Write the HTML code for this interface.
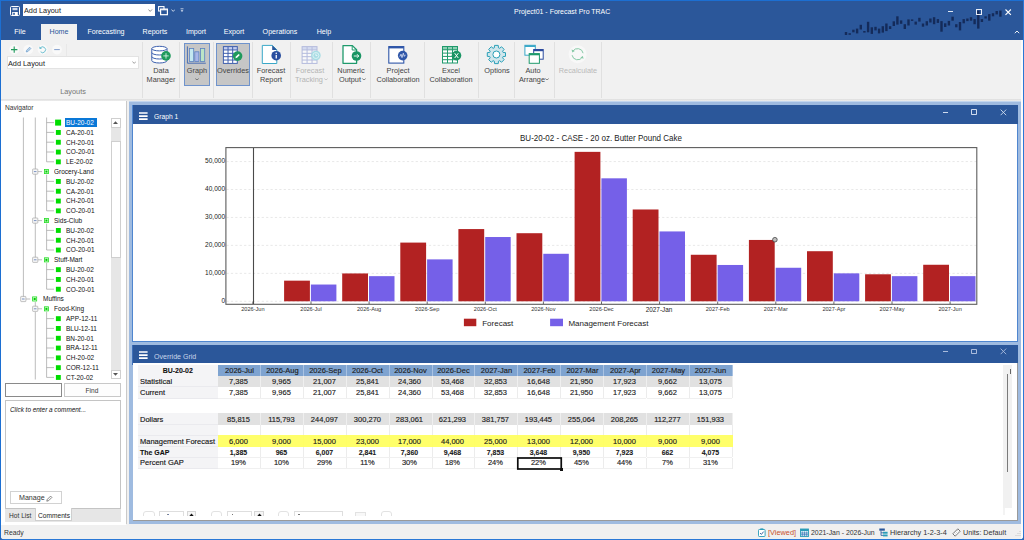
<!DOCTYPE html><html><head><meta charset="utf-8"><title>Project01 - Forecast Pro TRAC</title><style>
*{box-sizing:border-box;margin:0;padding:0}
html,body{width:1024px;height:540px;overflow:hidden;background:#f0f0f0}
body{font-family:"Liberation Sans",sans-serif;position:relative;color:#222}
.a{position:absolute}
.t{position:absolute;white-space:nowrap;line-height:1}
.c{text-align:center}
.ui{font-size:7.2px;color:#444}
.sep{position:absolute;top:42px;width:1px;height:55.5px;background:#e0e0e0}
.tab{position:absolute;top:27.9px;font-size:7.9px;transform:scaleX(.9);color:#fff;white-space:nowrap;line-height:1;text-align:center}
.rl{position:absolute;font-size:7.9px;transform:scaleX(.93);color:#444;white-space:nowrap;line-height:1;text-align:center;width:60px}
.tr{position:absolute;font-size:7.4px;color:#111;white-space:nowrap;line-height:1;transform:scaleX(.88);transform-origin:0 0}
.u{position:absolute;white-space:nowrap;line-height:1;font-size:7.9px;transform-origin:0 0}
.gb{font-weight:bold;transform:scaleX(.88)!important;-webkit-text-stroke:0.1px #111!important}
.g{position:absolute;font-size:7.9px;transform:scaleX(.95);-webkit-text-stroke:0.15px #222;color:#111;white-space:nowrap;line-height:11px;height:11px;text-align:center}
</style></head><body>
<div class="a" style="left:0;top:0;width:1024px;height:40px;background:#2b579a"></div>
<div class="a" style="left:0;top:0;width:1024px;height:1px;background:#1c6fd2"></div>
<div class="a" style="left:0;top:40px;width:1024px;height:59px;background:#f1f1f1"></div>
<div class="a" style="left:0;top:99px;width:1024px;height:2px;background:linear-gradient(#dedede,#ececec)"></div>
<div class="a" style="left:40.5px;top:24px;width:36.5px;height:16px;background:#f1f1f1"></div>
<svg class="a" style="left:10px;top:5.5px" width="10" height="10" viewBox="0 0 10 10"><rect x="0.5" y="0.5" width="9" height="9" rx="1" fill="#2b579a" stroke="#fff" stroke-width="1"/><rect x="2.5" y="1.8" width="5" height="2.4" fill="#c9d6ea"/><rect x="2.2" y="6" width="5.6" height="3.5" fill="#fff"/><rect x="3.2" y="6.8" width="1.6" height="2" fill="#2b579a"/></svg>
<div class="a" style="left:22.8px;top:3.8px;width:132.2px;height:12.6px;background:#fff"></div>
<div class="u" style="left:24.2px;top:6.8px;transform:scaleX(.925);color:#222">Add Layout</div>
<svg class="a" style="left:148.3px;top:8.6px" width="4.4" height="3" viewBox="0 0 4.4 3"><path d="M0.4 0.5 L2.2 2.4 L4 0.5" fill="none" stroke="#777" stroke-width="0.85"/></svg>
<svg class="a" style="left:158px;top:5.5px" width="11" height="10" viewBox="0 0 11 10"><rect x="0.6" y="0.6" width="5.4" height="4.4" fill="none" stroke="#fff" stroke-width="1.1"/><rect x="2.6" y="3.1" width="6.8" height="5.6" fill="#2b579a" stroke="#fff" stroke-width="1.2"/><rect x="3.2" y="3.3" width="5.6" height="1" fill="#fff"/></svg>
<svg class="a" style="left:170.8px;top:8.6px" width="4.4" height="3" viewBox="0 0 4.4 3"><path d="M0.4 0.5 L2.2 2.4 L4 0.5" fill="none" stroke="#dfe7f3" stroke-width="0.85"/></svg>
<svg class="a" style="left:179.8px;top:7.8px" width="4" height="5" viewBox="0 0 4 5"><path d="M0.5 0.8 H3.5" stroke="#dfe7f3" stroke-width="0.8"/><path d="M0.6 2.2 L2 4 L3.4 2.2 Z" fill="#dfe7f3"/></svg>
<div class="u" style="left:514px;top:8.2px;transform:scaleX(.883);color:#fff">Project01 - Forecast Pro TRAC</div>
<svg class="a" style="left:0;top:0" width="1024" height="40" viewBox="0 0 1024 40"><rect x="844.8" y="32.0" width="2.4" height="3.0" fill="#142b5a"/><rect x="848.5" y="33.2" width="2.4" height="1.6" fill="#142b5a"/><rect x="852.2" y="29.7" width="2.4" height="2.6" fill="#142b5a"/><rect x="855.9" y="28.6" width="2.4" height="4.8" fill="#142b5a"/><rect x="859.6" y="24.8" width="2.4" height="4.7" fill="#142b5a"/><rect x="863.2" y="31.0" width="2.4" height="1.6" fill="#142b5a"/><rect x="866.9" y="21.8" width="2.4" height="10.5" fill="#142b5a"/><rect x="870.6" y="27.3" width="2.4" height="6.6" fill="#142b5a"/><rect x="874.3" y="26.8" width="2.4" height="3.6" fill="#142b5a"/><rect x="877.9" y="28.6" width="2.4" height="4.8" fill="#142b5a"/><rect x="881.6" y="26.2" width="2.4" height="6.4" fill="#142b5a"/><rect x="885.2" y="23.5" width="2.4" height="7.6" fill="#142b5a"/><rect x="888.9" y="26.2" width="2.4" height="2.8" fill="#142b5a"/><rect x="892.6" y="21.3" width="2.4" height="4.7" fill="#142b5a"/><rect x="896.2" y="16.3" width="2.4" height="8.3" fill="#142b5a"/><rect x="899.9" y="20.4" width="2.4" height="3.4" fill="#142b5a"/><rect x="903.6" y="24.2" width="2.4" height="4.8" fill="#142b5a"/><rect x="907.3" y="19.4" width="2.4" height="6.1" fill="#142b5a"/><rect x="910.9" y="19.4" width="2.4" height="1.5" fill="#142b5a"/><rect x="914.5" y="21.6" width="2.4" height="3.0" fill="#142b5a"/><rect x="918.2" y="17.8" width="2.4" height="3.8" fill="#142b5a"/><rect x="921.8" y="23.5" width="2.4" height="3.2" fill="#142b5a"/><rect x="925.6" y="21.2" width="2.4" height="4.3" fill="#142b5a"/><rect x="929.2" y="18.5" width="2.4" height="4.0" fill="#142b5a"/><rect x="932.9" y="17.2" width="2.4" height="7.0" fill="#142b5a"/><rect x="936.7" y="19.1" width="2.4" height="3.8" fill="#142b5a"/><rect x="940.3" y="21.1" width="2.4" height="10.6" fill="#142b5a"/><rect x="944.0" y="23.3" width="2.4" height="3.7" fill="#142b5a"/><rect x="947.7" y="20.9" width="2.4" height="4.6" fill="#142b5a"/><rect x="951.4" y="16.7" width="2.4" height="4.0" fill="#142b5a"/><rect x="955.1" y="24.2" width="2.4" height="3.1" fill="#142b5a"/><rect x="958.8" y="22.0" width="2.4" height="8.4" fill="#142b5a"/><rect x="962.5" y="19.1" width="2.4" height="4.2" fill="#142b5a"/><rect x="966.2" y="18.5" width="2.4" height="2.6" fill="#142b5a"/><rect x="969.8" y="17.2" width="2.4" height="3.5" fill="#142b5a"/><rect x="973.4" y="19.1" width="2.4" height="5.1" fill="#142b5a"/><rect x="977.1" y="10.6" width="2.4" height="18.0" fill="#142b5a"/><rect x="980.7" y="19.1" width="2.4" height="2.9" fill="#142b5a"/><rect x="984.4" y="16.3" width="2.4" height="2.2" fill="#142b5a"/><rect x="988.1" y="14.1" width="2.4" height="6.6" fill="#142b5a"/><rect x="991.8" y="13.2" width="2.4" height="3.1" fill="#142b5a"/><rect x="995.5" y="11.0" width="2.4" height="3.4" fill="#142b5a"/><rect x="999.2" y="10.6" width="2.4" height="6.1" fill="#142b5a"/></svg>
<div class="a" style="left:948px;top:11.4px;width:5.2px;height:1px;background:#dfe7f3"></div>
<div class="a" style="left:976.2px;top:9.2px;width:6px;height:5.4px;border:0.8px solid #e9eef7"></div>
<svg class="a" style="left:1004.9px;top:8.8px" width="7" height="7" viewBox="0 0 7 7"><path d="M0.5 0.5 L5.9 5.9 M5.9 0.5 L0.5 5.9" stroke="#fff" stroke-width="1.1"/></svg>
<svg class="a" style="left:1013.6px;top:29.6px" width="6" height="4" viewBox="0 0 6 4"><path d="M0.8 3.2 L3 1 L5.2 3.2" fill="none" stroke="#fff" stroke-width="0.9"/></svg>
<div class="tab" style="left:-10.3px;width:60px;color:#fff">File</div>
<div class="tab" style="left:28.9px;width:60px;color:#2b579a">Home</div>
<div class="tab" style="left:75.6px;width:60px;color:#fff">Forecasting</div>
<div class="tab" style="left:124.7px;width:60px;color:#fff">Reports</div>
<div class="tab" style="left:166.0px;width:60px;color:#fff">Import</div>
<div class="tab" style="left:204.0px;width:60px;color:#fff">Export</div>
<div class="tab" style="left:250.0px;width:60px;color:#fff">Operations</div>
<div class="tab" style="left:293.5px;width:60px;color:#fff">Help</div>
<div class="sep" style="left:141.6px"></div>
<div class="sep" style="left:179.4px"></div>
<div class="sep" style="left:212.6px"></div>
<div class="sep" style="left:252.4px"></div>
<div class="sep" style="left:289.6px"></div>
<div class="sep" style="left:332.4px"></div>
<div class="sep" style="left:370.4px"></div>
<div class="sep" style="left:424.3px"></div>
<div class="sep" style="left:478.2px"></div>
<div class="sep" style="left:513.8px"></div>
<div class="sep" style="left:554.4px"></div>
<div class="sep" style="left:600.7px"></div>
<svg class="a" style="left:9px;top:44px" width="56" height="12" viewBox="0 0 56 12"><circle cx="5.2" cy="5.6" r="4.9" fill="#f9f9f9"/><path d="M5.2 2.4 V8.8 M2 5.6 H8.4" stroke="#1f9a5c" stroke-width="1.1"/><circle cx="19.3" cy="5.6" r="4.9" fill="#f9f9f9"/><path d="M17.2 8 L17.7 6.2 L20.6 3.2 L21.9 4.5 L19 7.5 Z" fill="#b9d3ea" stroke="#5e93c6" stroke-width="0.6"/><circle cx="33.6" cy="5.6" r="4.9" fill="#f9f9f9"/><path d="M31.2 4.2 A2.9 2.9 0 1 1 31.6 7.8" fill="none" stroke="#5fb9cc" stroke-width="0.9"/><path d="M30.3 2.6 L30.6 5 L33 4.4 Z" fill="#5fb9cc"/><circle cx="48" cy="5.6" r="4.9" fill="#f9f9f9"/><path d="M45.2 5.6 H50.8" stroke="#7f9ccc" stroke-width="1"/></svg>
<div class="a" style="left:65.5px;top:43.5px;width:1px;height:12px;background:#e8e8e8"></div>
<div class="a" style="left:6.8px;top:56px;width:132px;height:12.8px;background:#fff;border:1px solid #e3e3e3"></div>
<div class="u" style="left:8.2px;top:59.7px;transform:scaleX(.925);color:#222">Add Layout</div>
<svg class="a" style="left:131.9px;top:61.4px" width="4.4" height="3" viewBox="0 0 4.4 3"><path d="M0.4 0.5 L2.2 2.4 L4 0.5" fill="none" stroke="#888" stroke-width="0.8"/></svg>
<div class="rl" style="left:42.5px;top:88.3px;color:#777">Layouts</div>
<div class="a" style="left:183.7px;top:43px;width:26.2px;height:42.8px;background:#c6c6c6;border:1px solid #6f93cc"></div>
<div class="a" style="left:216px;top:43px;width:33.8px;height:42.8px;background:#c6c6c6;border:1px solid #6f93cc"></div>
<div class="rl" style="left:131.4px;top:67px;color:#444">Data</div><div class="rl" style="left:131.4px;top:76px;color:#444">Manager</div>
<div class="rl" style="left:167.0px;top:67px;color:#444">Graph</div>
<svg class="a" style="left:195.0px;top:77.7px" width="4" height="2.8" viewBox="0 0 4 2.8"><path d="M0.4 0.5 L2 2.2 L3.6 0.5" fill="none" stroke="#555" stroke-width="0.8"/></svg>
<div class="rl" style="left:203.0px;top:67px;color:#444">Overrides</div>
<div class="rl" style="left:241.2px;top:67px;color:#444">Forecast</div><div class="rl" style="left:241.2px;top:76px;color:#444">Report</div>
<div class="rl" style="left:279.6px;top:67px;color:#b4b4b4">Forecast</div><div class="rl" style="left:279.6px;top:76px;color:#b4b4b4">Tracking&nbsp;</div>
<svg class="a" style="left:323.5px;top:77.7px" width="4" height="2.8" viewBox="0 0 4 2.8"><path d="M0.4 0.5 L2 2.2 L3.6 0.5" fill="none" stroke="#b4b4b4" stroke-width="0.8"/></svg>
<div class="rl" style="left:320.6px;top:67px;color:#444">Numeric</div><div class="rl" style="left:320.6px;top:76px;color:#444">Output&nbsp;</div>
<svg class="a" style="left:361.7px;top:77.7px" width="4" height="2.8" viewBox="0 0 4 2.8"><path d="M0.4 0.5 L2 2.2 L3.6 0.5" fill="none" stroke="#555" stroke-width="0.8"/></svg>
<div class="rl" style="left:367.7px;top:67px;color:#444">Project</div><div class="rl" style="left:367.7px;top:76px;color:#444">Collaboration</div>
<div class="rl" style="left:421.2px;top:67px;color:#444">Excel</div><div class="rl" style="left:421.2px;top:76px;color:#444">Collaboration</div>
<div class="rl" style="left:466.6px;top:67px;color:#444">Options</div>
<div class="rl" style="left:503.4px;top:67px;color:#444">Auto</div><div class="rl" style="left:503.4px;top:76px;color:#444">Arrange&nbsp;</div>
<svg class="a" style="left:545.0px;top:77.7px" width="4" height="2.8" viewBox="0 0 4 2.8"><path d="M0.4 0.5 L2 2.2 L3.6 0.5" fill="none" stroke="#555" stroke-width="0.8"/></svg>
<div class="rl" style="left:547.8px;top:67px;color:#b9b9b9">Recalculate</div>
<svg class="a" style="left:140px;top:40px" width="470" height="30" viewBox="140 40 470 30"><path d="M151.8 48.6 V60.6 A7.6 2.4 0 0 0 167 60.6 V48.6" fill="#fff" stroke="#3b5fae" stroke-width="1"/><ellipse cx="159.4" cy="48.6" rx="7.6" ry="2.3" fill="#fff" stroke="#3b5fae" stroke-width="1"/><path d="M151.8 52.6 A7.6 2.4 0 0 0 167 52.6 M151.8 56.6 A7.6 2.4 0 0 0 167 56.6" fill="none" stroke="#3b5fae" stroke-width="1"/><circle cx="166" cy="55.9" r="4.8" fill="#1f9a5c"/><path d="M166 53.2 V58.6 M163.3 55.9 H168.7" stroke="#e4f4ec" stroke-width="0.85"/><path d="M187.4 46.4 V63.2 H205.8" fill="none" stroke="#4a6fb5" stroke-width="1"/><rect x="189.5" y="48.5" width="4.2" height="13" fill="#c4e8f0" stroke="#5b82c0" stroke-width="0.8"/><rect x="194.8" y="51.8" width="4.1" height="9.7" fill="#a9b6e8" stroke="#5b82c0" stroke-width="0.8"/><rect x="200.5" y="48.5" width="4.2" height="13" fill="#bce4c6" stroke="#5b82c0" stroke-width="0.8"/><g opacity="1"><rect x="222.9" y="46.1" width="14.9" height="17.8" fill="#3f5fae"/><rect x="223.90" y="47.10" width="3.63" height="2.36" fill="#c5cff0"/><rect x="228.53" y="47.10" width="3.63" height="2.36" fill="#c5cff0"/><rect x="233.17" y="47.10" width="3.63" height="2.36" fill="#c5cff0"/><rect x="223.90" y="50.46" width="3.63" height="2.36" fill="#fff"/><rect x="228.53" y="50.46" width="3.63" height="2.36" fill="#fff"/><rect x="233.17" y="50.46" width="3.63" height="2.36" fill="#fff"/><rect x="223.90" y="53.82" width="3.63" height="2.36" fill="#fff"/><rect x="228.53" y="53.82" width="3.63" height="2.36" fill="#fff"/><rect x="233.17" y="53.82" width="3.63" height="2.36" fill="#fff"/><rect x="223.90" y="57.18" width="3.63" height="2.36" fill="#fff"/><rect x="228.53" y="57.18" width="3.63" height="2.36" fill="#fff"/><rect x="233.17" y="57.18" width="3.63" height="2.36" fill="#fff"/><rect x="223.90" y="60.54" width="3.63" height="2.36" fill="#fff"/><rect x="228.53" y="60.54" width="3.63" height="2.36" fill="#fff"/><rect x="233.17" y="60.54" width="3.63" height="2.36" fill="#fff"/></g><circle cx="237.6" cy="56.1" r="4.8" fill="#1f9a5c"/><path d="M235.4 58.3 L235.9 56.6 L238.6 53.9 L239.8 55.1 L237.1 57.8 Z" fill="#fff"/><path d="M262.3 45.4 H272.4 L276.8 49.8 V63.5 H262.3 Z" fill="#fff" stroke="#3aa8c8" stroke-width="1"/><path d="M272.2 45.2 V50 H277 Z" fill="#2b579a"/><circle cx="276.2" cy="55.7" r="4.8" fill="#2a4f9e"/><rect x="275.6" y="54.9" width="1.3" height="3.6" fill="#fff"/><circle cx="276.25" cy="53.3" r="0.8" fill="#fff"/><g opacity="0.62"><rect x="301.6" y="46.1" width="15.9" height="17.8" fill="#8f9bd2"/><rect x="302.60" y="47.10" width="3.97" height="2.36" fill="#c5cff0"/><rect x="307.57" y="47.10" width="3.97" height="2.36" fill="#c5cff0"/><rect x="312.53" y="47.10" width="3.97" height="2.36" fill="#c5cff0"/><rect x="302.60" y="50.46" width="3.97" height="2.36" fill="#fff"/><rect x="307.57" y="50.46" width="3.97" height="2.36" fill="#fff"/><rect x="312.53" y="50.46" width="3.97" height="2.36" fill="#fff"/><rect x="302.60" y="53.82" width="3.97" height="2.36" fill="#fff"/><rect x="307.57" y="53.82" width="3.97" height="2.36" fill="#fff"/><rect x="312.53" y="53.82" width="3.97" height="2.36" fill="#fff"/><rect x="302.60" y="57.18" width="3.97" height="2.36" fill="#fff"/><rect x="307.57" y="57.18" width="3.97" height="2.36" fill="#fff"/><rect x="312.53" y="57.18" width="3.97" height="2.36" fill="#fff"/><rect x="302.60" y="60.54" width="3.97" height="2.36" fill="#fff"/><rect x="307.57" y="60.54" width="3.97" height="2.36" fill="#fff"/><rect x="312.53" y="60.54" width="3.97" height="2.36" fill="#fff"/></g><circle cx="315.9" cy="55.5" r="4.8" fill="#a9dde4"/><circle cx="315.9" cy="55.5" r="3" fill="none" stroke="#e6f6f8" stroke-width="0.8"/><path d="M315.9 53.6 V55.6 H317.4" fill="none" stroke="#f4fbfc" stroke-width="0.8"/><path d="M343 45.6 H352.4 L356.6 49.8 V63.3 H343 Z" fill="#fff" stroke="#1f9a6c" stroke-width="1.3" stroke-linejoin="round"/><path d="M352.2 45.6 V50 H356.6" fill="none" stroke="#1f9a6c" stroke-width="1"/><circle cx="356.5" cy="56" r="4.8" fill="#1a9564"/><path d="M353.8 56 H358.6 M357 54.2 L358.8 56 L357 57.8" fill="none" stroke="#fff" stroke-width="0.9"/><rect x="388.8" y="46.6" width="15" height="16.5" fill="#fff" stroke="#2f56a8" stroke-width="1.1"/><rect x="388.8" y="46.2" width="15" height="2.2" fill="#2f56a8"/><circle cx="402.7" cy="55.6" r="4.8" fill="#2f56a8"/><path d="M399.8 56.6 L401 54.2 L402 57.6 L403.3 53.2 L404.3 56.4 L405.4 54.8" fill="none" stroke="#dfe6f6" stroke-width="0.8"/><g opacity="1"><rect x="442.0" y="46.0" width="16.0" height="17.5" fill="#1f9a6c"/><rect x="443.00" y="47.00" width="4.00" height="2.30" fill="#8fd0b4"/><rect x="448.00" y="47.00" width="4.00" height="2.30" fill="#8fd0b4"/><rect x="453.00" y="47.00" width="4.00" height="2.30" fill="#8fd0b4"/><rect x="443.00" y="50.30" width="4.00" height="2.30" fill="#fff"/><rect x="448.00" y="50.30" width="4.00" height="2.30" fill="#fff"/><rect x="453.00" y="50.30" width="4.00" height="2.30" fill="#fff"/><rect x="443.00" y="53.60" width="4.00" height="2.30" fill="#fff"/><rect x="448.00" y="53.60" width="4.00" height="2.30" fill="#fff"/><rect x="453.00" y="53.60" width="4.00" height="2.30" fill="#fff"/><rect x="443.00" y="56.90" width="4.00" height="2.30" fill="#fff"/><rect x="448.00" y="56.90" width="4.00" height="2.30" fill="#fff"/><rect x="453.00" y="56.90" width="4.00" height="2.30" fill="#fff"/><rect x="443.00" y="60.20" width="4.00" height="2.30" fill="#fff"/><rect x="448.00" y="60.20" width="4.00" height="2.30" fill="#fff"/><rect x="453.00" y="60.20" width="4.00" height="2.30" fill="#fff"/></g><circle cx="456.5" cy="55.6" r="4.8" fill="#1a9564"/><path d="M454.7 53.2 L458.3 58 M458.3 53.2 L454.7 58" stroke="#fff" stroke-width="1"/><path d="M494.55 45.39 L498.25 45.39 L498.47 47.81 L499.67 48.31 L501.54 46.75 L504.15 49.36 L502.59 51.23 L503.09 52.43 L505.51 52.65 L505.51 56.35 L503.09 56.57 L502.59 57.77 L504.15 59.64 L501.54 62.25 L499.67 60.69 L498.47 61.19 L498.25 63.61 L494.55 63.61 L494.33 61.19 L493.13 60.69 L491.26 62.25 L488.65 59.64 L490.21 57.77 L489.71 56.57 L487.29 56.35 L487.29 52.65 L489.71 52.43 L490.21 51.23 L488.65 49.36 L491.26 46.75 L493.13 48.31 L494.33 47.81 Z" fill="#cfe6ec" stroke="#2aa0b8" stroke-width="1" stroke-linejoin="round"/><circle cx="496.4" cy="54.5" r="3.5" fill="#fff" stroke="#2aa0b8" stroke-width="1"/><rect x="524.9" y="45.3" width="10.4" height="9.9" fill="#fff" stroke="#3aa8c8" stroke-width="1"/><rect x="524.9" y="45.2" width="10.4" height="1.8" fill="#3aa8c8"/><rect x="533.7" y="49.5" width="9.5" height="9.7" fill="#fff" stroke="#2b4a9e" stroke-width="1"/><rect x="533.7" y="49.4" width="9.5" height="1.8" fill="#2b4a9e"/><rect x="529.2" y="53.6" width="10.2" height="9.7" fill="#fff" stroke="#1f9a6c" stroke-width="1"/><rect x="529.2" y="53.5" width="10.2" height="1.8" fill="#1f9a6c"/><circle cx="577.6" cy="54.2" r="9" fill="#f8f8f8"/><g transform="translate(1155.2,0) scale(-1,1)"><path d="M572.1 53.2 A5.6 5.6 0 0 1 582.4 51.3" fill="none" stroke="#86c9a6" stroke-width="1"/><path d="M583.6 49.6 L582.9 52.5 L580.4 51 Z" fill="#86c9a6"/><path d="M583.1 55.2 A5.6 5.6 0 0 1 572.8 57.1" fill="none" stroke="#86c9a6" stroke-width="1"/><path d="M571.6 58.8 L572.3 55.9 L574.8 57.4 Z" fill="#86c9a6"/></g></svg>
<div class="a" style="left:1px;top:101px;width:125px;height:423.6px;background:#fff"></div>
<div class="t" style="left:4.9px;top:104.4px;font-size:7.4px;color:#333;transform:scaleX(.9);transform-origin:0 0">Navigator</div>
<svg class="a" style="left:0;top:117px" width="112" height="263" viewBox="0 117 112 263"><path d="M23.4 117.5 V299.0" stroke="#a0a0a0" stroke-width="0.7"/><path d="M35.3 117.5 V259.8" stroke="#a0a0a0" stroke-width="0.7"/><path d="M35.3 302.0 V308.8" stroke="#a0a0a0" stroke-width="0.7"/><path d="M35.3 311.8 V379.5" stroke="#a0a0a0" stroke-width="0.7"/><path d="M46.6 117.5 V161.8" stroke="#a0a0a0" stroke-width="0.7"/><path d="M46.6 174.6 V210.8" stroke="#a0a0a0" stroke-width="0.7"/><path d="M46.6 223.6 V250.0" stroke="#a0a0a0" stroke-width="0.7"/><path d="M46.6 262.8 V289.2" stroke="#a0a0a0" stroke-width="0.7"/><path d="M46.6 311.8 V377.4" stroke="#a0a0a0" stroke-width="0.7"/><path d="M46.6 122.6 H54" stroke="#a0a0a0" stroke-width="0.7"/><rect x="55.1" y="119.6" width="6" height="6" fill="#00dd00"/><path d="M46.6 132.4 H54" stroke="#a0a0a0" stroke-width="0.7"/><rect x="55.9" y="130.0" width="4.9" height="4.9" fill="#00dd00"/><path d="M46.6 142.2 H54" stroke="#a0a0a0" stroke-width="0.7"/><rect x="55.9" y="139.8" width="4.9" height="4.9" fill="#00dd00"/><path d="M46.6 152.0 H54" stroke="#a0a0a0" stroke-width="0.7"/><rect x="55.9" y="149.6" width="4.9" height="4.9" fill="#00dd00"/><path d="M46.6 161.8 H54" stroke="#a0a0a0" stroke-width="0.7"/><rect x="55.9" y="159.4" width="4.9" height="4.9" fill="#00dd00"/><path d="M37.9 171.6 H42" stroke="#a0a0a0" stroke-width="0.7"/><rect x="32.6" y="169.0" width="5.2" height="5.2" rx="0.6" fill="#f7f7f7" stroke="#9a9a9a" stroke-width="0.6"/><path d="M33.9 171.6 H36.5" stroke="#4466aa" stroke-width="0.7"/><rect x="44.4" y="169.5" width="4.1" height="4.1" fill="#e4ffe4" stroke="#22dd22" stroke-width="0.8"/><rect x="45.4" y="170.5" width="2.1" height="2.1" fill="#00cc00"/><path d="M46.6 181.4 H54" stroke="#a0a0a0" stroke-width="0.7"/><rect x="55.9" y="179.0" width="4.9" height="4.9" fill="#00dd00"/><path d="M46.6 191.2 H54" stroke="#a0a0a0" stroke-width="0.7"/><rect x="55.9" y="188.8" width="4.9" height="4.9" fill="#00dd00"/><path d="M46.6 201.0 H54" stroke="#a0a0a0" stroke-width="0.7"/><rect x="55.9" y="198.6" width="4.9" height="4.9" fill="#00dd00"/><path d="M46.6 210.8 H54" stroke="#a0a0a0" stroke-width="0.7"/><rect x="55.9" y="208.4" width="4.9" height="4.9" fill="#00dd00"/><path d="M37.9 220.6 H42" stroke="#a0a0a0" stroke-width="0.7"/><rect x="32.6" y="218.0" width="5.2" height="5.2" rx="0.6" fill="#f7f7f7" stroke="#9a9a9a" stroke-width="0.6"/><path d="M33.9 220.6 H36.5" stroke="#4466aa" stroke-width="0.7"/><rect x="44.4" y="218.5" width="4.1" height="4.1" fill="#e4ffe4" stroke="#22dd22" stroke-width="0.8"/><rect x="45.4" y="219.5" width="2.1" height="2.1" fill="#00cc00"/><path d="M46.6 230.4 H54" stroke="#a0a0a0" stroke-width="0.7"/><rect x="55.9" y="228.0" width="4.9" height="4.9" fill="#00dd00"/><path d="M46.6 240.2 H54" stroke="#a0a0a0" stroke-width="0.7"/><rect x="55.9" y="237.8" width="4.9" height="4.9" fill="#00dd00"/><path d="M46.6 250.0 H54" stroke="#a0a0a0" stroke-width="0.7"/><rect x="55.9" y="247.6" width="4.9" height="4.9" fill="#00dd00"/><path d="M37.9 259.8 H42" stroke="#a0a0a0" stroke-width="0.7"/><rect x="32.6" y="257.2" width="5.2" height="5.2" rx="0.6" fill="#f7f7f7" stroke="#9a9a9a" stroke-width="0.6"/><path d="M33.9 259.8 H36.5" stroke="#4466aa" stroke-width="0.7"/><rect x="44.4" y="257.8" width="4.1" height="4.1" fill="#e4ffe4" stroke="#22dd22" stroke-width="0.8"/><rect x="45.4" y="258.8" width="2.1" height="2.1" fill="#00cc00"/><path d="M46.6 269.6 H54" stroke="#a0a0a0" stroke-width="0.7"/><rect x="55.9" y="267.2" width="4.9" height="4.9" fill="#00dd00"/><path d="M46.6 279.4 H54" stroke="#a0a0a0" stroke-width="0.7"/><rect x="55.9" y="277.0" width="4.9" height="4.9" fill="#00dd00"/><path d="M46.6 289.2 H54" stroke="#a0a0a0" stroke-width="0.7"/><rect x="55.9" y="286.8" width="4.9" height="4.9" fill="#00dd00"/><path d="M26 299.0 H30.2" stroke="#a0a0a0" stroke-width="0.7"/><rect x="20.7" y="296.4" width="5.2" height="5.2" rx="0.6" fill="#f7f7f7" stroke="#9a9a9a" stroke-width="0.6"/><path d="M22 299.0 H24.6" stroke="#4466aa" stroke-width="0.7"/><rect x="32.6" y="296.9" width="4.1" height="4.1" fill="#e4ffe4" stroke="#22dd22" stroke-width="0.8"/><rect x="33.6" y="297.9" width="2.1" height="2.1" fill="#00cc00"/><path d="M37.9 308.8 H42" stroke="#a0a0a0" stroke-width="0.7"/><rect x="32.6" y="306.2" width="5.2" height="5.2" rx="0.6" fill="#f7f7f7" stroke="#9a9a9a" stroke-width="0.6"/><path d="M33.9 308.8 H36.5" stroke="#4466aa" stroke-width="0.7"/><rect x="44.4" y="306.8" width="4.1" height="4.1" fill="#e4ffe4" stroke="#22dd22" stroke-width="0.8"/><rect x="45.4" y="307.8" width="2.1" height="2.1" fill="#00cc00"/><path d="M46.6 318.6 H54" stroke="#a0a0a0" stroke-width="0.7"/><rect x="55.9" y="316.2" width="4.9" height="4.9" fill="#00dd00"/><path d="M46.6 328.4 H54" stroke="#a0a0a0" stroke-width="0.7"/><rect x="55.9" y="326.0" width="4.9" height="4.9" fill="#00dd00"/><path d="M46.6 338.2 H54" stroke="#a0a0a0" stroke-width="0.7"/><rect x="55.9" y="335.8" width="4.9" height="4.9" fill="#00dd00"/><path d="M46.6 348.0 H54" stroke="#a0a0a0" stroke-width="0.7"/><rect x="55.9" y="345.6" width="4.9" height="4.9" fill="#00dd00"/><path d="M46.6 357.8 H54" stroke="#a0a0a0" stroke-width="0.7"/><rect x="55.9" y="355.4" width="4.9" height="4.9" fill="#00dd00"/><path d="M46.6 367.6 H54" stroke="#a0a0a0" stroke-width="0.7"/><rect x="55.9" y="365.2" width="4.9" height="4.9" fill="#00dd00"/><path d="M46.6 377.4 H54" stroke="#a0a0a0" stroke-width="0.7"/><rect x="55.9" y="375.0" width="4.9" height="4.9" fill="#00dd00"/></svg>
<div class="a" style="left:65.2px;top:118.2px;width:31.8px;height:8.9px;background:#0a78d7"></div>
<div class="tr" style="left:66.2px;top:118.9px;color:#fff">BU-20-02</div>
<div class="tr" style="left:66.2px;top:128.7px;color:#111">CA-20-01</div>
<div class="tr" style="left:66.2px;top:138.5px;color:#111">CH-20-01</div>
<div class="tr" style="left:66.2px;top:148.3px;color:#111">CO-20-01</div>
<div class="tr" style="left:66.2px;top:158.1px;color:#111">LE-20-02</div>
<div class="tr" style="left:54.0px;top:167.9px;color:#111">Grocery-Land</div>
<div class="tr" style="left:66.2px;top:177.7px;color:#111">BU-20-02</div>
<div class="tr" style="left:66.2px;top:187.5px;color:#111">CA-20-01</div>
<div class="tr" style="left:66.2px;top:197.3px;color:#111">CH-20-01</div>
<div class="tr" style="left:66.2px;top:207.1px;color:#111">CO-20-01</div>
<div class="tr" style="left:54.0px;top:216.9px;color:#111">Sids-Club</div>
<div class="tr" style="left:66.2px;top:226.7px;color:#111">BU-20-02</div>
<div class="tr" style="left:66.2px;top:236.5px;color:#111">CH-20-01</div>
<div class="tr" style="left:66.2px;top:246.3px;color:#111">CO-20-01</div>
<div class="tr" style="left:54.0px;top:256.1px;color:#111">Stuff-Mart</div>
<div class="tr" style="left:66.2px;top:265.9px;color:#111">BU-20-02</div>
<div class="tr" style="left:66.2px;top:275.7px;color:#111">CH-20-01</div>
<div class="tr" style="left:66.2px;top:285.5px;color:#111">CO-20-01</div>
<div class="tr" style="left:42.6px;top:295.3px;color:#111">Muffins</div>
<div class="tr" style="left:54.0px;top:305.1px;color:#111">Food-King</div>
<div class="tr" style="left:66.2px;top:314.9px;color:#111">APP-12-11</div>
<div class="tr" style="left:66.2px;top:324.7px;color:#111">BLU-12-11</div>
<div class="tr" style="left:66.2px;top:334.5px;color:#111">BN-20-01</div>
<div class="tr" style="left:66.2px;top:344.3px;color:#111">BRA-12-11</div>
<div class="tr" style="left:66.2px;top:354.1px;color:#111">CH-20-02</div>
<div class="tr" style="left:66.2px;top:363.9px;color:#111">COR-12-11</div>
<div class="tr" style="left:66.2px;top:373.7px;color:#111">CT-20-02</div>
<div class="a" style="left:110.8px;top:117.6px;width:10.2px;height:261.6px;background:#e6e6e6"></div>
<div class="a" style="left:110.8px;top:117.6px;width:10.2px;height:10px;background:#fff;border:1px solid #cfcfcf"></div>
<svg class="a" style="left:113.4px;top:121px" width="5" height="3" viewBox="0 0 5 3"><path d="M0 3 L2.5 0.3 L5 3 Z" fill="#555"/></svg>
<div class="a" style="left:110.8px;top:141.1px;width:10.2px;height:116.5px;background:#fff;border:1px solid #cfcfcf"></div>
<div class="a" style="left:110.8px;top:369.8px;width:10.2px;height:9.4px;background:#fff;border:1px solid #cfcfcf"></div>
<svg class="a" style="left:113.4px;top:373.2px" width="5" height="3" viewBox="0 0 5 3"><path d="M0 0 L2.5 2.7 L5 0 Z" fill="#555"/></svg>
<div class="a" style="left:4.9px;top:383.3px;width:57px;height:13.3px;background:#fff;border:1px solid #8a8a8a"></div>
<div class="a" style="left:64.2px;top:383.3px;width:57.3px;height:13.3px;background:#fdfdfd;border:1px solid #c8c8c8"></div>
<div class="rl" style="left:62.4px;top:386.9px;font-size:7.3px;color:#3a3a3a;transform:scaleX(.9)">Find</div>
<div class="a" style="left:4.9px;top:400.1px;width:116.6px;height:108.6px;background:#fff;border:1px solid #c4c4c4"></div>
<div class="t" style="left:10.4px;top:405.6px;font-size:7.3px;color:#111;font-style:italic;transform:scaleX(.875);transform-origin:0 0">Click to enter a comment...</div>
<div class="a" style="left:9.6px;top:490.7px;width:52.3px;height:13.8px;background:#fff;border:1px solid #d2d2d2"></div>
<div class="u" style="left:18.6px;top:494.2px;transform:scaleX(.9);color:#333">Manage</div>
<svg class="a" style="left:45.5px;top:494.5px" width="7" height="7" viewBox="0 0 7 7"><path d="M0.8 6.2 L1.3 4.4 L4.6 1.1 L5.9 2.4 L2.6 5.7 Z" fill="none" stroke="#555" stroke-width="0.7"/></svg>
<div class="a" style="left:4.9px;top:508.7px;width:116.6px;height:13.3px;background:#e6e6e6"></div>
<div class="a" style="left:35.4px;top:508px;width:36.8px;height:13.2px;background:#fff;border:1px solid #cfcfcf;border-top:none"></div>
<div class="t" style="left:8.6px;top:511.7px;font-size:7.2px;color:#333;transform:scaleX(.92);transform-origin:0 0">Hot List</div>
<div class="t" style="left:38px;top:511.7px;font-size:7.2px;color:#222;transform:scaleX(.92);transform-origin:0 0">Comments</div>
<div class="a" style="left:126px;top:101px;width:1px;height:423px;background:#c9c9c9"></div>
<div class="a" style="left:129px;top:101.3px;width:892px;height:422.7px;background:#9fbbe0"></div>
<div class="a" style="left:129px;top:101.3px;width:892px;height:1px;background:#c2d6ee"></div>
<div class="a" style="left:132px;top:104.5px;width:886.2px;height:237.5px;background:#4f86cf"></div>
<div class="a" style="left:132.6px;top:105px;width:885.4px;height:18.5px;background:#2b579a"></div>
<div class="a" style="left:133px;top:123.5px;width:884.2px;height:217.5px;background:#fff"></div>
<div class="a" style="left:132.4px;top:344.8px;width:885.8px;height:20px;background:#3e6fb8"></div>
<div class="a" style="left:132.5px;top:362.8px;width:885.2px;height:158.3px;background:#9a9a9a"></div>
<div class="a" style="left:132.6px;top:345px;width:885.4px;height:17.8px;background:#2b579a"></div>
<div class="a" style="left:133px;top:362.8px;width:884.1px;height:157.7px;background:#fff"></div>
<svg class="a" style="left:139.0px;top:111.7px" width="9" height="9" viewBox="0 0 9 9"><path d="M0 1 H8.6 M0 4.1 H8.6 M0 7.2 H8.6" stroke="#fff" stroke-width="1.7"/></svg>
<svg class="a" style="left:139.0px;top:351.2px" width="9" height="9" viewBox="0 0 9 9"><path d="M0 1 H8.6 M0 4.1 H8.6 M0 7.2 H8.6" stroke="#fff" stroke-width="1.7"/></svg>
<div class="u" style="left:153.6px;top:113px;transform:scaleX(.85);color:#fff">Graph 1</div>
<div class="u" style="left:153.6px;top:352.5px;transform:scaleX(.892);color:#c9d6ea">Override Grid</div>
<div class="a" style="left:943px;top:111.6px;width:5.2px;height:1px;background:#cfdbee"></div><div class="a" style="left:971.3px;top:109.0px;width:6px;height:5.8px;border:0.8px solid #cfdbee;border-radius:0.8px"></div><svg class="a" style="left:1000px;top:108.6px" width="7" height="7" viewBox="0 0 7 7"><path d="M0.6 0.6 L6.2 6.2 M6.2 0.6 L0.6 6.2" stroke="#cfdbee" stroke-width="0.9"/></svg>
<div class="a" style="left:943px;top:351.2px;width:5.2px;height:1px;background:#a9bbdc"></div><div class="a" style="left:971.3px;top:348.6px;width:6px;height:5.8px;border:0.8px solid #a9bbdc;border-radius:0.8px"></div><svg class="a" style="left:1000px;top:348.2px" width="7" height="7" viewBox="0 0 7 7"><path d="M0.6 0.6 L6.2 6.2 M6.2 0.6 L0.6 6.2" stroke="#a9bbdc" stroke-width="0.9"/></svg>
<svg class="a" style="left:0;top:0" width="1024" height="345" viewBox="0 0 1024 345"><path d="M226.5 301.30 H976.5" stroke="#e2e2e2" stroke-width="0.8" stroke-dasharray="2.2 2.2"/><path d="M226.5 273.35 H976.5" stroke="#e2e2e2" stroke-width="0.8" stroke-dasharray="2.2 2.2"/><path d="M226.5 245.40 H976.5" stroke="#e2e2e2" stroke-width="0.8" stroke-dasharray="2.2 2.2"/><path d="M226.5 217.45 H976.5" stroke="#e2e2e2" stroke-width="0.8" stroke-dasharray="2.2 2.2"/><path d="M226.5 189.50 H976.5" stroke="#e2e2e2" stroke-width="0.8" stroke-dasharray="2.2 2.2"/><path d="M226.5 161.55 H976.5" stroke="#e2e2e2" stroke-width="0.8" stroke-dasharray="2.2 2.2"/><rect x="284.10" y="280.66" width="25.8" height="20.64" fill="#b22222"/><rect x="310.90" y="284.53" width="25.5" height="16.77" fill="#7560e8"/><rect x="342.20" y="273.45" width="25.8" height="27.85" fill="#b22222"/><rect x="369.00" y="276.15" width="25.5" height="25.15" fill="#7560e8"/><rect x="400.30" y="242.59" width="25.8" height="58.71" fill="#b22222"/><rect x="427.10" y="259.38" width="25.5" height="41.92" fill="#7560e8"/><rect x="458.40" y="229.07" width="25.8" height="72.23" fill="#b22222"/><rect x="485.20" y="237.02" width="25.5" height="64.28" fill="#7560e8"/><rect x="516.50" y="233.21" width="25.8" height="68.09" fill="#b22222"/><rect x="543.30" y="253.79" width="25.5" height="47.51" fill="#7560e8"/><rect x="574.60" y="151.86" width="25.8" height="149.44" fill="#b22222"/><rect x="601.40" y="178.32" width="25.5" height="122.98" fill="#7560e8"/><rect x="632.70" y="209.48" width="25.8" height="91.82" fill="#b22222"/><rect x="659.50" y="231.43" width="25.5" height="69.88" fill="#7560e8"/><rect x="690.80" y="254.77" width="25.8" height="46.53" fill="#b22222"/><rect x="717.60" y="264.97" width="25.5" height="36.33" fill="#7560e8"/><rect x="748.90" y="239.95" width="25.8" height="61.35" fill="#b22222"/><rect x="775.70" y="267.76" width="25.5" height="33.54" fill="#7560e8"/><rect x="807.00" y="251.21" width="25.8" height="50.09" fill="#b22222"/><rect x="833.80" y="273.35" width="25.5" height="27.95" fill="#7560e8"/><rect x="865.10" y="274.29" width="25.8" height="27.01" fill="#b22222"/><rect x="891.90" y="276.15" width="25.5" height="25.15" fill="#7560e8"/><rect x="923.20" y="264.76" width="25.8" height="36.54" fill="#b22222"/><rect x="950.00" y="276.15" width="25.5" height="25.15" fill="#7560e8"/><rect x="225.9" y="147.6" width="750.9" height="156.7" fill="none" stroke="#5c5c5c" stroke-width="1.1"/><path d="M253.5 148 V304" stroke="#4a4a4a" stroke-width="1.1"/><path d="M252.90 301.5 V304" stroke="#444" stroke-width="0.8"/><path d="M311.00 301.5 V304" stroke="#444" stroke-width="0.8"/><path d="M369.10 301.5 V304" stroke="#444" stroke-width="0.8"/><path d="M427.20 301.5 V304" stroke="#444" stroke-width="0.8"/><path d="M485.30 301.5 V304" stroke="#444" stroke-width="0.8"/><path d="M543.40 301.5 V304" stroke="#444" stroke-width="0.8"/><path d="M601.50 301.5 V304" stroke="#444" stroke-width="0.8"/><path d="M659.60 301.5 V304" stroke="#444" stroke-width="0.8"/><path d="M717.70 301.5 V304" stroke="#444" stroke-width="0.8"/><path d="M775.80 301.5 V304" stroke="#444" stroke-width="0.8"/><path d="M833.90 301.5 V304" stroke="#444" stroke-width="0.8"/><path d="M892.00 301.5 V304" stroke="#444" stroke-width="0.8"/><path d="M950.10 301.5 V304" stroke="#444" stroke-width="0.8"/><circle cx="774.9" cy="239.7" r="2.3" fill="#bdbdbd" stroke="#444" stroke-width="0.8"/><rect x="463.9" y="318.7" width="12.4" height="7.5" fill="#b22222"/><rect x="550.1" y="318.7" width="12.9" height="7.5" fill="#7560e8"/></svg>
<div class="t" style="left:185px;width:40px;text-align:right;top:297.9px;font-size:6.5px;color:#222">0</div>
<div class="t" style="left:185px;width:40px;text-align:right;top:270.0px;font-size:6.5px;color:#222">10,000</div>
<div class="t" style="left:185px;width:40px;text-align:right;top:242.0px;font-size:6.5px;color:#222">20,000</div>
<div class="t" style="left:185px;width:40px;text-align:right;top:214.1px;font-size:6.5px;color:#222">30,000</div>
<div class="t" style="left:185px;width:40px;text-align:right;top:186.1px;font-size:6.5px;color:#222">40,000</div>
<div class="t" style="left:185px;width:40px;text-align:right;top:158.2px;font-size:6.5px;color:#222">50,000</div>
<div class="t c" style="left:227.9px;width:50px;top:306.6px;font-size:5.6px;color:#333">2026-Jun</div>
<div class="t c" style="left:286.0px;width:50px;top:306.6px;font-size:5.6px;color:#333">2026-Jul</div>
<div class="t c" style="left:344.1px;width:50px;top:306.6px;font-size:5.6px;color:#333">2026-Aug</div>
<div class="t c" style="left:402.2px;width:50px;top:306.6px;font-size:5.6px;color:#333">2026-Sep</div>
<div class="t c" style="left:460.3px;width:50px;top:306.6px;font-size:5.6px;color:#333">2026-Oct</div>
<div class="t c" style="left:518.4px;width:50px;top:306.6px;font-size:5.6px;color:#333">2026-Nov</div>
<div class="t c" style="left:576.5px;width:50px;top:306.6px;font-size:5.6px;color:#333">2026-Dec</div>
<div class="t c" style="left:634.0px;width:50px;top:306.6px;font-size:6.4px;color:#222">2027-Jan</div>
<div class="t c" style="left:692.7px;width:50px;top:306.6px;font-size:5.6px;color:#333">2027-Feb</div>
<div class="t c" style="left:750.8px;width:50px;top:306.6px;font-size:5.6px;color:#333">2027-Mar</div>
<div class="t c" style="left:808.9px;width:50px;top:306.6px;font-size:5.6px;color:#333">2027-Apr</div>
<div class="t c" style="left:867.0px;width:50px;top:306.6px;font-size:5.6px;color:#333">2027-May</div>
<div class="t c" style="left:925.1px;width:50px;top:306.6px;font-size:5.6px;color:#333">2027-Jun</div>
<div class="t c" style="left:501px;width:200px;top:133.9px;font-size:8.8px;transform:scaleX(.91);color:#222">BU-20-02 - CASE - 20 oz. Butter Pound Cake</div>
<div class="t" style="left:482.2px;top:320px;font-size:8px;color:#222">Forecast</div>
<div class="t" style="left:568.4px;top:320px;font-size:8px;color:#222">Management Forecast</div>
<div class="a" style="left:138.2px;top:365px;width:79.6px;height:33.2px;background:#f4f4f6"></div>
<div class="a" style="left:138.2px;top:413.3px;width:79.6px;height:55.2px;background:#f4f4f6"></div>
<div class="g gb" style="left:138.2px;top:365.2px;width:79.6px">BU-20-02</div>
<div class="a" style="left:217.8px;top:365.0px;width:514.4px;height:11.0px;background:#7ea3d0"></div>
<div class="a" style="left:260.07px;top:365.0px;width:1px;height:11.0px;background:#a9c2e2"></div>
<div class="g" style="left:217.80px;top:365.2px;width:42.87px;color:#1a1a1a">2026-Jul</div>
<div class="a" style="left:302.94px;top:365.0px;width:1px;height:11.0px;background:#a9c2e2"></div>
<div class="g" style="left:260.67px;top:365.2px;width:42.87px;color:#1a1a1a">2026-Aug</div>
<div class="a" style="left:345.81px;top:365.0px;width:1px;height:11.0px;background:#a9c2e2"></div>
<div class="g" style="left:303.54px;top:365.2px;width:42.87px;color:#1a1a1a">2026-Sep</div>
<div class="a" style="left:388.68px;top:365.0px;width:1px;height:11.0px;background:#a9c2e2"></div>
<div class="g" style="left:346.41px;top:365.2px;width:42.87px;color:#1a1a1a">2026-Oct</div>
<div class="a" style="left:431.55px;top:365.0px;width:1px;height:11.0px;background:#a9c2e2"></div>
<div class="g" style="left:389.28px;top:365.2px;width:42.87px;color:#1a1a1a">2026-Nov</div>
<div class="a" style="left:474.42px;top:365.0px;width:1px;height:11.0px;background:#a9c2e2"></div>
<div class="g" style="left:432.15px;top:365.2px;width:42.87px;color:#1a1a1a">2026-Dec</div>
<div class="a" style="left:517.29px;top:365.0px;width:1px;height:11.0px;background:#a9c2e2"></div>
<div class="g" style="left:475.02px;top:365.2px;width:42.87px;color:#1a1a1a">2027-Jan</div>
<div class="a" style="left:560.16px;top:365.0px;width:1px;height:11.0px;background:#a9c2e2"></div>
<div class="g" style="left:517.89px;top:365.2px;width:42.87px;color:#1a1a1a">2027-Feb</div>
<div class="a" style="left:603.03px;top:365.0px;width:1px;height:11.0px;background:#a9c2e2"></div>
<div class="g" style="left:560.76px;top:365.2px;width:42.87px;color:#1a1a1a">2027-Mar</div>
<div class="a" style="left:645.90px;top:365.0px;width:1px;height:11.0px;background:#a9c2e2"></div>
<div class="g" style="left:603.63px;top:365.2px;width:42.87px;color:#1a1a1a">2027-Apr</div>
<div class="a" style="left:688.77px;top:365.0px;width:1px;height:11.0px;background:#a9c2e2"></div>
<div class="g" style="left:646.50px;top:365.2px;width:42.87px;color:#1a1a1a">2027-May</div>
<div class="a" style="left:731.64px;top:365.0px;width:1px;height:11.0px;background:#a9c2e2"></div>
<div class="g" style="left:689.37px;top:365.2px;width:42.87px;color:#1a1a1a">2027-Jun</div>
<div class="a" style="left:138.2px;top:386.4px;width:79.6px;height:0.6px;background:#eaeaee"></div>
<div class="g" style="left:140.1px;top:376.2px;text-align:left;transform-origin:0 50%">Statistical</div>
<div class="a" style="left:217.8px;top:376.0px;width:514.4px;height:11.0px;background:#e1e1e1"></div>
<div class="a" style="left:260.07px;top:376.0px;width:1px;height:11.0px;background:#efefef"></div>
<div class="g" style="left:217.00px;top:376.2px;width:42.87px;color:#1a1a1a">7,385</div>
<div class="a" style="left:302.94px;top:376.0px;width:1px;height:11.0px;background:#efefef"></div>
<div class="g" style="left:259.87px;top:376.2px;width:42.87px;color:#1a1a1a">9,965</div>
<div class="a" style="left:345.81px;top:376.0px;width:1px;height:11.0px;background:#efefef"></div>
<div class="g" style="left:302.74px;top:376.2px;width:42.87px;color:#1a1a1a">21,007</div>
<div class="a" style="left:388.68px;top:376.0px;width:1px;height:11.0px;background:#efefef"></div>
<div class="g" style="left:345.61px;top:376.2px;width:42.87px;color:#1a1a1a">25,841</div>
<div class="a" style="left:431.55px;top:376.0px;width:1px;height:11.0px;background:#efefef"></div>
<div class="g" style="left:388.48px;top:376.2px;width:42.87px;color:#1a1a1a">24,360</div>
<div class="a" style="left:474.42px;top:376.0px;width:1px;height:11.0px;background:#efefef"></div>
<div class="g" style="left:431.35px;top:376.2px;width:42.87px;color:#1a1a1a">53,468</div>
<div class="a" style="left:517.29px;top:376.0px;width:1px;height:11.0px;background:#efefef"></div>
<div class="g" style="left:474.22px;top:376.2px;width:42.87px;color:#1a1a1a">32,853</div>
<div class="a" style="left:560.16px;top:376.0px;width:1px;height:11.0px;background:#efefef"></div>
<div class="g" style="left:517.09px;top:376.2px;width:42.87px;color:#1a1a1a">16,648</div>
<div class="a" style="left:603.03px;top:376.0px;width:1px;height:11.0px;background:#efefef"></div>
<div class="g" style="left:559.96px;top:376.2px;width:42.87px;color:#1a1a1a">21,950</div>
<div class="a" style="left:645.90px;top:376.0px;width:1px;height:11.0px;background:#efefef"></div>
<div class="g" style="left:602.83px;top:376.2px;width:42.87px;color:#1a1a1a">17,923</div>
<div class="a" style="left:688.77px;top:376.0px;width:1px;height:11.0px;background:#efefef"></div>
<div class="g" style="left:645.70px;top:376.2px;width:42.87px;color:#1a1a1a">9,662</div>
<div class="a" style="left:731.64px;top:376.0px;width:1px;height:11.0px;background:#efefef"></div>
<div class="g" style="left:688.57px;top:376.2px;width:42.87px;color:#1a1a1a">13,075</div>
<div class="a" style="left:138.2px;top:397.6px;width:79.6px;height:0.6px;background:#eaeaee"></div>
<div class="g" style="left:140.1px;top:387.2px;text-align:left;transform-origin:0 50%">Current</div>
<div class="a" style="left:217.8px;top:387.0px;width:514.4px;height:11.2px;background:#fff"></div>
<div class="a" style="left:260.07px;top:387.0px;width:1px;height:11.2px;background:#ececec"></div>
<div class="a" style="left:217.80px;top:397.6px;width:42.87px;height:1px;background:#f0f0f0"></div>
<div class="g" style="left:217.00px;top:387.2px;width:42.87px;color:#1a1a1a">7,385</div>
<div class="a" style="left:302.94px;top:387.0px;width:1px;height:11.2px;background:#ececec"></div>
<div class="a" style="left:260.67px;top:397.6px;width:42.87px;height:1px;background:#f0f0f0"></div>
<div class="g" style="left:259.87px;top:387.2px;width:42.87px;color:#1a1a1a">9,965</div>
<div class="a" style="left:345.81px;top:387.0px;width:1px;height:11.2px;background:#ececec"></div>
<div class="a" style="left:303.54px;top:397.6px;width:42.87px;height:1px;background:#f0f0f0"></div>
<div class="g" style="left:302.74px;top:387.2px;width:42.87px;color:#1a1a1a">21,007</div>
<div class="a" style="left:388.68px;top:387.0px;width:1px;height:11.2px;background:#ececec"></div>
<div class="a" style="left:346.41px;top:397.6px;width:42.87px;height:1px;background:#f0f0f0"></div>
<div class="g" style="left:345.61px;top:387.2px;width:42.87px;color:#1a1a1a">25,841</div>
<div class="a" style="left:431.55px;top:387.0px;width:1px;height:11.2px;background:#ececec"></div>
<div class="a" style="left:389.28px;top:397.6px;width:42.87px;height:1px;background:#f0f0f0"></div>
<div class="g" style="left:388.48px;top:387.2px;width:42.87px;color:#1a1a1a">24,360</div>
<div class="a" style="left:474.42px;top:387.0px;width:1px;height:11.2px;background:#ececec"></div>
<div class="a" style="left:432.15px;top:397.6px;width:42.87px;height:1px;background:#f0f0f0"></div>
<div class="g" style="left:431.35px;top:387.2px;width:42.87px;color:#1a1a1a">53,468</div>
<div class="a" style="left:517.29px;top:387.0px;width:1px;height:11.2px;background:#ececec"></div>
<div class="a" style="left:475.02px;top:397.6px;width:42.87px;height:1px;background:#f0f0f0"></div>
<div class="g" style="left:474.22px;top:387.2px;width:42.87px;color:#1a1a1a">32,853</div>
<div class="a" style="left:560.16px;top:387.0px;width:1px;height:11.2px;background:#ececec"></div>
<div class="a" style="left:517.89px;top:397.6px;width:42.87px;height:1px;background:#f0f0f0"></div>
<div class="g" style="left:517.09px;top:387.2px;width:42.87px;color:#1a1a1a">16,648</div>
<div class="a" style="left:603.03px;top:387.0px;width:1px;height:11.2px;background:#ececec"></div>
<div class="a" style="left:560.76px;top:397.6px;width:42.87px;height:1px;background:#f0f0f0"></div>
<div class="g" style="left:559.96px;top:387.2px;width:42.87px;color:#1a1a1a">21,950</div>
<div class="a" style="left:645.90px;top:387.0px;width:1px;height:11.2px;background:#ececec"></div>
<div class="a" style="left:603.63px;top:397.6px;width:42.87px;height:1px;background:#f0f0f0"></div>
<div class="g" style="left:602.83px;top:387.2px;width:42.87px;color:#1a1a1a">17,923</div>
<div class="a" style="left:688.77px;top:387.0px;width:1px;height:11.2px;background:#ececec"></div>
<div class="a" style="left:646.50px;top:397.6px;width:42.87px;height:1px;background:#f0f0f0"></div>
<div class="g" style="left:645.70px;top:387.2px;width:42.87px;color:#1a1a1a">9,662</div>
<div class="a" style="left:731.64px;top:387.0px;width:1px;height:11.2px;background:#ececec"></div>
<div class="a" style="left:689.37px;top:397.6px;width:42.87px;height:1px;background:#f0f0f0"></div>
<div class="g" style="left:688.57px;top:387.2px;width:42.87px;color:#1a1a1a">13,075</div>
<div class="a" style="left:138.2px;top:424.0px;width:79.6px;height:0.6px;background:#eaeaee"></div>
<div class="g" style="left:140.1px;top:413.6px;text-align:left;transform-origin:0 50%">Dollars</div>
<div class="a" style="left:217.8px;top:413.4px;width:514.4px;height:11.2px;background:#e1e1e1"></div>
<div class="a" style="left:260.07px;top:413.4px;width:1px;height:11.2px;background:#efefef"></div>
<div class="g" style="left:217.00px;top:413.6px;width:42.87px;color:#1a1a1a">85,815</div>
<div class="a" style="left:302.94px;top:413.4px;width:1px;height:11.2px;background:#efefef"></div>
<div class="g" style="left:259.87px;top:413.6px;width:42.87px;color:#1a1a1a">115,793</div>
<div class="a" style="left:345.81px;top:413.4px;width:1px;height:11.2px;background:#efefef"></div>
<div class="g" style="left:302.74px;top:413.6px;width:42.87px;color:#1a1a1a">244,097</div>
<div class="a" style="left:388.68px;top:413.4px;width:1px;height:11.2px;background:#efefef"></div>
<div class="g" style="left:345.61px;top:413.6px;width:42.87px;color:#1a1a1a">300,270</div>
<div class="a" style="left:431.55px;top:413.4px;width:1px;height:11.2px;background:#efefef"></div>
<div class="g" style="left:388.48px;top:413.6px;width:42.87px;color:#1a1a1a">283,061</div>
<div class="a" style="left:474.42px;top:413.4px;width:1px;height:11.2px;background:#efefef"></div>
<div class="g" style="left:431.35px;top:413.6px;width:42.87px;color:#1a1a1a">621,293</div>
<div class="a" style="left:517.29px;top:413.4px;width:1px;height:11.2px;background:#efefef"></div>
<div class="g" style="left:474.22px;top:413.6px;width:42.87px;color:#1a1a1a">381,757</div>
<div class="a" style="left:560.16px;top:413.4px;width:1px;height:11.2px;background:#efefef"></div>
<div class="g" style="left:517.09px;top:413.6px;width:42.87px;color:#1a1a1a">193,445</div>
<div class="a" style="left:603.03px;top:413.4px;width:1px;height:11.2px;background:#efefef"></div>
<div class="g" style="left:559.96px;top:413.6px;width:42.87px;color:#1a1a1a">255,064</div>
<div class="a" style="left:645.90px;top:413.4px;width:1px;height:11.2px;background:#efefef"></div>
<div class="g" style="left:602.83px;top:413.6px;width:42.87px;color:#1a1a1a">208,265</div>
<div class="a" style="left:688.77px;top:413.4px;width:1px;height:11.2px;background:#efefef"></div>
<div class="g" style="left:645.70px;top:413.6px;width:42.87px;color:#1a1a1a">112,277</div>
<div class="a" style="left:731.64px;top:413.4px;width:1px;height:11.2px;background:#efefef"></div>
<div class="g" style="left:688.57px;top:413.6px;width:42.87px;color:#1a1a1a">151,933</div>
<div class="a" style="left:138.2px;top:434.8px;width:79.6px;height:0.6px;background:#eaeaee"></div>
<div class="a" style="left:217.8px;top:424.6px;width:514.4px;height:10.8px;background:#fff"></div>
<div class="a" style="left:260.07px;top:424.6px;width:1px;height:10.8px;background:#ececec"></div>
<div class="a" style="left:217.80px;top:434.8px;width:42.87px;height:1px;background:#f0f0f0"></div>
<div class="a" style="left:302.94px;top:424.6px;width:1px;height:10.8px;background:#ececec"></div>
<div class="a" style="left:260.67px;top:434.8px;width:42.87px;height:1px;background:#f0f0f0"></div>
<div class="a" style="left:345.81px;top:424.6px;width:1px;height:10.8px;background:#ececec"></div>
<div class="a" style="left:303.54px;top:434.8px;width:42.87px;height:1px;background:#f0f0f0"></div>
<div class="a" style="left:388.68px;top:424.6px;width:1px;height:10.8px;background:#ececec"></div>
<div class="a" style="left:346.41px;top:434.8px;width:42.87px;height:1px;background:#f0f0f0"></div>
<div class="a" style="left:431.55px;top:424.6px;width:1px;height:10.8px;background:#ececec"></div>
<div class="a" style="left:389.28px;top:434.8px;width:42.87px;height:1px;background:#f0f0f0"></div>
<div class="a" style="left:474.42px;top:424.6px;width:1px;height:10.8px;background:#ececec"></div>
<div class="a" style="left:432.15px;top:434.8px;width:42.87px;height:1px;background:#f0f0f0"></div>
<div class="a" style="left:517.29px;top:424.6px;width:1px;height:10.8px;background:#ececec"></div>
<div class="a" style="left:475.02px;top:434.8px;width:42.87px;height:1px;background:#f0f0f0"></div>
<div class="a" style="left:560.16px;top:424.6px;width:1px;height:10.8px;background:#ececec"></div>
<div class="a" style="left:517.89px;top:434.8px;width:42.87px;height:1px;background:#f0f0f0"></div>
<div class="a" style="left:603.03px;top:424.6px;width:1px;height:10.8px;background:#ececec"></div>
<div class="a" style="left:560.76px;top:434.8px;width:42.87px;height:1px;background:#f0f0f0"></div>
<div class="a" style="left:645.90px;top:424.6px;width:1px;height:10.8px;background:#ececec"></div>
<div class="a" style="left:603.63px;top:434.8px;width:42.87px;height:1px;background:#f0f0f0"></div>
<div class="a" style="left:688.77px;top:424.6px;width:1px;height:10.8px;background:#ececec"></div>
<div class="a" style="left:646.50px;top:434.8px;width:42.87px;height:1px;background:#f0f0f0"></div>
<div class="a" style="left:731.64px;top:424.6px;width:1px;height:10.8px;background:#ececec"></div>
<div class="a" style="left:689.37px;top:434.8px;width:42.87px;height:1px;background:#f0f0f0"></div>
<div class="a" style="left:138.2px;top:446.0px;width:79.6px;height:0.6px;background:#eaeaee"></div>
<div class="g" style="left:140.1px;top:435.6px;text-align:left;transform-origin:0 50%">Management Forecast</div>
<div class="a" style="left:217.8px;top:435.4px;width:514.4px;height:11.2px;background:#ffff6a"></div>
<div class="a" style="left:260.07px;top:435.4px;width:1px;height:11.2px;background:#ffff66"></div>
<div class="g" style="left:217.00px;top:435.6px;width:42.87px;color:#1a1a1a">6,000</div>
<div class="a" style="left:302.94px;top:435.4px;width:1px;height:11.2px;background:#ffff66"></div>
<div class="g" style="left:259.87px;top:435.6px;width:42.87px;color:#1a1a1a">9,000</div>
<div class="a" style="left:345.81px;top:435.4px;width:1px;height:11.2px;background:#ffff66"></div>
<div class="g" style="left:302.74px;top:435.6px;width:42.87px;color:#1a1a1a">15,000</div>
<div class="a" style="left:388.68px;top:435.4px;width:1px;height:11.2px;background:#ffff66"></div>
<div class="g" style="left:345.61px;top:435.6px;width:42.87px;color:#1a1a1a">23,000</div>
<div class="a" style="left:431.55px;top:435.4px;width:1px;height:11.2px;background:#ffff66"></div>
<div class="g" style="left:388.48px;top:435.6px;width:42.87px;color:#1a1a1a">17,000</div>
<div class="a" style="left:474.42px;top:435.4px;width:1px;height:11.2px;background:#ffff66"></div>
<div class="g" style="left:431.35px;top:435.6px;width:42.87px;color:#1a1a1a">44,000</div>
<div class="a" style="left:517.29px;top:435.4px;width:1px;height:11.2px;background:#ffff66"></div>
<div class="g" style="left:474.22px;top:435.6px;width:42.87px;color:#1a1a1a">25,000</div>
<div class="a" style="left:560.16px;top:435.4px;width:1px;height:11.2px;background:#ffff66"></div>
<div class="g" style="left:517.09px;top:435.6px;width:42.87px;color:#1a1a1a">13,000</div>
<div class="a" style="left:603.03px;top:435.4px;width:1px;height:11.2px;background:#ffff66"></div>
<div class="g" style="left:559.96px;top:435.6px;width:42.87px;color:#1a1a1a">12,000</div>
<div class="a" style="left:645.90px;top:435.4px;width:1px;height:11.2px;background:#ffff66"></div>
<div class="g" style="left:602.83px;top:435.6px;width:42.87px;color:#1a1a1a">10,000</div>
<div class="a" style="left:688.77px;top:435.4px;width:1px;height:11.2px;background:#ffff66"></div>
<div class="g" style="left:645.70px;top:435.6px;width:42.87px;color:#1a1a1a">9,000</div>
<div class="a" style="left:731.64px;top:435.4px;width:1px;height:11.2px;background:#ffff66"></div>
<div class="g" style="left:688.57px;top:435.6px;width:42.87px;color:#1a1a1a">9,000</div>
<div class="a" style="left:138.2px;top:456.9px;width:79.6px;height:0.6px;background:#eaeaee"></div>
<div class="g gb" style="left:140.1px;top:446.8px;text-align:left;transform-origin:0 50%">The GAP</div>
<div class="a" style="left:217.8px;top:446.6px;width:514.4px;height:10.9px;background:#fff"></div>
<div class="a" style="left:260.07px;top:446.6px;width:1px;height:10.9px;background:#ececec"></div>
<div class="a" style="left:217.80px;top:456.9px;width:42.87px;height:1px;background:#f0f0f0"></div>
<div class="g gb" style="left:217.00px;top:446.8px;width:42.87px;color:#1a1a1a">1,385</div>
<div class="a" style="left:302.94px;top:446.6px;width:1px;height:10.9px;background:#ececec"></div>
<div class="a" style="left:260.67px;top:456.9px;width:42.87px;height:1px;background:#f0f0f0"></div>
<div class="g gb" style="left:259.87px;top:446.8px;width:42.87px;color:#1a1a1a">965</div>
<div class="a" style="left:345.81px;top:446.6px;width:1px;height:10.9px;background:#ececec"></div>
<div class="a" style="left:303.54px;top:456.9px;width:42.87px;height:1px;background:#f0f0f0"></div>
<div class="g gb" style="left:302.74px;top:446.8px;width:42.87px;color:#1a1a1a">6,007</div>
<div class="a" style="left:388.68px;top:446.6px;width:1px;height:10.9px;background:#ececec"></div>
<div class="a" style="left:346.41px;top:456.9px;width:42.87px;height:1px;background:#f0f0f0"></div>
<div class="g gb" style="left:345.61px;top:446.8px;width:42.87px;color:#1a1a1a">2,841</div>
<div class="a" style="left:431.55px;top:446.6px;width:1px;height:10.9px;background:#ececec"></div>
<div class="a" style="left:389.28px;top:456.9px;width:42.87px;height:1px;background:#f0f0f0"></div>
<div class="g gb" style="left:388.48px;top:446.8px;width:42.87px;color:#1a1a1a">7,360</div>
<div class="a" style="left:474.42px;top:446.6px;width:1px;height:10.9px;background:#ececec"></div>
<div class="a" style="left:432.15px;top:456.9px;width:42.87px;height:1px;background:#f0f0f0"></div>
<div class="g gb" style="left:431.35px;top:446.8px;width:42.87px;color:#1a1a1a">9,468</div>
<div class="a" style="left:517.29px;top:446.6px;width:1px;height:10.9px;background:#ececec"></div>
<div class="a" style="left:475.02px;top:456.9px;width:42.87px;height:1px;background:#f0f0f0"></div>
<div class="g gb" style="left:474.22px;top:446.8px;width:42.87px;color:#1a1a1a">7,853</div>
<div class="a" style="left:560.16px;top:446.6px;width:1px;height:10.9px;background:#ececec"></div>
<div class="a" style="left:517.89px;top:456.9px;width:42.87px;height:1px;background:#f0f0f0"></div>
<div class="g gb" style="left:517.09px;top:446.8px;width:42.87px;color:#1a1a1a">3,648</div>
<div class="a" style="left:603.03px;top:446.6px;width:1px;height:10.9px;background:#ececec"></div>
<div class="a" style="left:560.76px;top:456.9px;width:42.87px;height:1px;background:#f0f0f0"></div>
<div class="g gb" style="left:559.96px;top:446.8px;width:42.87px;color:#1a1a1a">9,950</div>
<div class="a" style="left:645.90px;top:446.6px;width:1px;height:10.9px;background:#ececec"></div>
<div class="a" style="left:603.63px;top:456.9px;width:42.87px;height:1px;background:#f0f0f0"></div>
<div class="g gb" style="left:602.83px;top:446.8px;width:42.87px;color:#1a1a1a">7,923</div>
<div class="a" style="left:688.77px;top:446.6px;width:1px;height:10.9px;background:#ececec"></div>
<div class="a" style="left:646.50px;top:456.9px;width:42.87px;height:1px;background:#f0f0f0"></div>
<div class="g gb" style="left:645.70px;top:446.8px;width:42.87px;color:#1a1a1a">662</div>
<div class="a" style="left:731.64px;top:446.6px;width:1px;height:10.9px;background:#ececec"></div>
<div class="a" style="left:689.37px;top:456.9px;width:42.87px;height:1px;background:#f0f0f0"></div>
<div class="g gb" style="left:688.57px;top:446.8px;width:42.87px;color:#1a1a1a">4,075</div>
<div class="a" style="left:138.2px;top:467.9px;width:79.6px;height:0.6px;background:#eaeaee"></div>
<div class="g" style="left:140.1px;top:456.7px;text-align:left;transform-origin:0 50%">Percent GAP</div>
<div class="a" style="left:217.8px;top:457.5px;width:514.4px;height:11.0px;background:#fff"></div>
<div class="a" style="left:260.07px;top:457.5px;width:1px;height:11.0px;background:#ececec"></div>
<div class="a" style="left:217.80px;top:467.9px;width:42.87px;height:1px;background:#f0f0f0"></div>
<div class="g" style="left:217.00px;top:456.7px;width:42.87px;color:#1a1a1a">19%</div>
<div class="a" style="left:302.94px;top:457.5px;width:1px;height:11.0px;background:#ececec"></div>
<div class="a" style="left:260.67px;top:467.9px;width:42.87px;height:1px;background:#f0f0f0"></div>
<div class="g" style="left:259.87px;top:456.7px;width:42.87px;color:#1a1a1a">10%</div>
<div class="a" style="left:345.81px;top:457.5px;width:1px;height:11.0px;background:#ececec"></div>
<div class="a" style="left:303.54px;top:467.9px;width:42.87px;height:1px;background:#f0f0f0"></div>
<div class="g" style="left:302.74px;top:456.7px;width:42.87px;color:#1a1a1a">29%</div>
<div class="a" style="left:388.68px;top:457.5px;width:1px;height:11.0px;background:#ececec"></div>
<div class="a" style="left:346.41px;top:467.9px;width:42.87px;height:1px;background:#f0f0f0"></div>
<div class="g" style="left:345.61px;top:456.7px;width:42.87px;color:#1a1a1a">11%</div>
<div class="a" style="left:431.55px;top:457.5px;width:1px;height:11.0px;background:#ececec"></div>
<div class="a" style="left:389.28px;top:467.9px;width:42.87px;height:1px;background:#f0f0f0"></div>
<div class="g" style="left:388.48px;top:456.7px;width:42.87px;color:#1a1a1a">30%</div>
<div class="a" style="left:474.42px;top:457.5px;width:1px;height:11.0px;background:#ececec"></div>
<div class="a" style="left:432.15px;top:467.9px;width:42.87px;height:1px;background:#f0f0f0"></div>
<div class="g" style="left:431.35px;top:456.7px;width:42.87px;color:#1a1a1a">18%</div>
<div class="a" style="left:517.29px;top:457.5px;width:1px;height:11.0px;background:#ececec"></div>
<div class="a" style="left:475.02px;top:467.9px;width:42.87px;height:1px;background:#f0f0f0"></div>
<div class="g" style="left:474.22px;top:456.7px;width:42.87px;color:#1a1a1a">24%</div>
<div class="a" style="left:560.16px;top:457.5px;width:1px;height:11.0px;background:#ececec"></div>
<div class="a" style="left:517.89px;top:467.9px;width:42.87px;height:1px;background:#f0f0f0"></div>
<div class="g" style="left:517.09px;top:456.7px;width:42.87px;color:#1a1a1a">22%</div>
<div class="a" style="left:603.03px;top:457.5px;width:1px;height:11.0px;background:#ececec"></div>
<div class="a" style="left:560.76px;top:467.9px;width:42.87px;height:1px;background:#f0f0f0"></div>
<div class="g" style="left:559.96px;top:456.7px;width:42.87px;color:#1a1a1a">45%</div>
<div class="a" style="left:645.90px;top:457.5px;width:1px;height:11.0px;background:#ececec"></div>
<div class="a" style="left:603.63px;top:467.9px;width:42.87px;height:1px;background:#f0f0f0"></div>
<div class="g" style="left:602.83px;top:456.7px;width:42.87px;color:#1a1a1a">44%</div>
<div class="a" style="left:688.77px;top:457.5px;width:1px;height:11.0px;background:#ececec"></div>
<div class="a" style="left:646.50px;top:467.9px;width:42.87px;height:1px;background:#f0f0f0"></div>
<div class="g" style="left:645.70px;top:456.7px;width:42.87px;color:#1a1a1a">7%</div>
<div class="a" style="left:731.64px;top:457.5px;width:1px;height:11.0px;background:#ececec"></div>
<div class="a" style="left:689.37px;top:467.9px;width:42.87px;height:1px;background:#f0f0f0"></div>
<div class="g" style="left:688.57px;top:456.7px;width:42.87px;color:#1a1a1a">31%</div>
<svg class="a" style="left:510px;top:450px" width="60" height="26" viewBox="510 450 60 26"><rect x="517.79" y="458" width="43.47" height="11" fill="none" stroke="#0c0c0c" stroke-width="1.7"/></svg>
<div class="a" style="left:560.2px;top:468.3px;width:2.4px;height:2.3px;background:#111"></div>
<div class="a" style="left:1002.7px;top:365px;width:8.9px;height:142.5px;background:#f1f1f1"></div>
<div class="a" style="left:1002.7px;top:507.5px;width:2.4px;height:7px;background:#f3f3f3"></div>
<div class="a" style="left:1006.8px;top:374.4px;width:1px;height:98px;background:#7a7a7a"></div>
<div class="a" style="left:1009.6px;top:369px;width:1px;height:5.4px;background:#666"></div>
<div class="a" style="left:143.2px;top:511.4px;width:11.4px;height:4.2px;overflow:hidden"><div style="width:100%;height:12px;border:1px solid #e2e2e2;border-radius:3px;background:#fff"></div></div>
<div class="a" style="left:159.3px;top:511.4px;width:24.9px;height:4.2px;border:1px solid #dedede;border-bottom:none;background:#fff"></div>
<div class="a" style="left:186.8px;top:511.4px;width:9.6px;height:4.2px;border:1px solid #d6d6d6;border-bottom:none;background:#f6f6f6"></div><svg class="a" style="left:189.1px;top:512.6px" width="5" height="3" viewBox="0 0 5 3"><path d="M0.3 3 L2.5 0.4 L4.7 3 Z" fill="#111"/></svg>
<div class="a" style="left:210.9px;top:511.4px;width:11.1px;height:4.2px;overflow:hidden"><div style="width:100%;height:12px;border:1px solid #e2e2e2;border-radius:3px;background:#fff"></div></div>
<div class="a" style="left:226.7px;top:511.4px;width:24.9px;height:4.2px;border:1px solid #dedede;border-bottom:none;background:#fff"></div>
<div class="a" style="left:254.2px;top:511.4px;width:9.6px;height:4.2px;border:1px solid #d6d6d6;border-bottom:none;background:#f6f6f6"></div><svg class="a" style="left:256.5px;top:512.6px" width="5" height="3" viewBox="0 0 5 3"><path d="M0.3 3 L2.5 0.4 L4.7 3 Z" fill="#111"/></svg>
<div class="a" style="left:278.0px;top:511.4px;width:11.1px;height:4.2px;overflow:hidden"><div style="width:100%;height:12px;border:1px solid #e2e2e2;border-radius:3px;background:#fff"></div></div>
<div class="a" style="left:294.1px;top:511.4px;width:49.2px;height:4.2px;border:1px solid #dedede;border-bottom:none;background:#fff"></div>
<div class="a" style="left:355px;top:511.6px;width:10.9px;height:4px;border:1px solid #e2e2e2;border-bottom:none;background:#f8f8f8"></div>
<div class="a" style="left:381.4px;top:511.4px;width:10.2px;height:4.2px;overflow:hidden"><div style="width:100%;height:12px;border:1px solid #e2e2e2;border-radius:3px;background:#fff"></div></div>
<div class="a" style="left:166.5px;top:513.8px;width:1px;height:1.6px;background:#888"></div><div class="a" style="left:168.3px;top:513.6px;width:1.2px;height:1.8px;background:#6a7fb0"></div>
<div class="a" style="left:232.3px;top:513.8px;width:0.8px;height:1.6px;background:#777"></div>
<div class="a" style="left:298.4px;top:514px;width:1.2px;height:1.4px;background:#777"></div>
<div class="a" style="left:1px;top:524.6px;width:1022px;height:14.4px;background:#f0f0f0"></div>
<div class="u" style="left:4.3px;top:528.6px;transform:scaleX(.86);color:#333">Ready</div>
<svg class="a" style="left:757.5px;top:528px" width="8" height="9" viewBox="0 0 8 9"><rect x="0.5" y="1.5" width="6.6" height="7" rx="0.8" fill="#fff" stroke="#2a9cb8" stroke-width="0.9"/><rect x="2.3" y="0.4" width="3" height="1.6" fill="#2a9cb8"/><path d="M2 5 L3.4 6.4 L5.6 3.6" fill="none" stroke="#2b579a" stroke-width="0.9"/></svg>
<div class="u" style="left:767.8px;top:528.6px;transform:scaleX(.93);color:#c9502c">[Viewed]</div>
<svg class="a" style="left:800px;top:528px" width="9" height="9" viewBox="0 0 9 9"><rect x="0.5" y="1" width="8" height="7.5" fill="#d8f0f6" stroke="#2a9cb8" stroke-width="0.9"/><rect x="0.5" y="1" width="8" height="2" fill="#2a9cb8"/><path d="M2.3 3.5 V8 M4.5 3.5 V8 M6.7 3.5 V8 M1 5 H8 M1 6.7 H8" stroke="#2b68b0" stroke-width="0.6"/></svg>
<div class="u" style="left:811px;top:528.6px;transform:scaleX(.874);color:#333">2021-Jan - 2026-Jun</div>
<svg class="a" style="left:879px;top:528px" width="9" height="9" viewBox="0 0 9 9"><rect x="0.3" y="0.5" width="5.5" height="2.2" fill="#2b579a"/><path d="M2 2.7 V7.4 H4 M2 4.8 H4" fill="none" stroke="#2b579a" stroke-width="0.8"/><rect x="4" y="3.8" width="4.6" height="1.9" fill="#2a9cb8"/><rect x="4" y="6.5" width="4.6" height="1.9" fill="#2a9cb8"/></svg>
<div class="u" style="left:890.3px;top:528.6px;transform:scaleX(.926);color:#333">Hierarchy 1-2-3-4</div>
<svg class="a" style="left:951.5px;top:528px" width="9" height="9" viewBox="0 0 9 9"><path d="M0.8 5.8 L5.8 0.8 L8.2 3.2 L3.2 8.2 Z" fill="#fff" stroke="#555" stroke-width="0.8"/><path d="M2.6 5 l0.9 0.9 M3.9 3.7 l0.9 0.9 M5.2 2.4 l0.9 0.9" stroke="#555" stroke-width="0.5"/></svg>
<div class="u" style="left:962.8px;top:528.6px;transform:scaleX(.911);color:#333">Units: Default</div>
<svg class="a" style="left:1014px;top:530.4px" width="8" height="8" viewBox="0 0 8 8"><g fill="#c6c6c6"><rect x="5.5" y="1" width="1" height="1"/><rect x="3.5" y="3" width="1" height="1"/><rect x="5.5" y="3" width="1" height="1"/><rect x="1.5" y="5" width="1" height="1"/><rect x="3.5" y="5" width="1" height="1"/><rect x="5.5" y="5" width="1" height="1"/></g></svg>
<div class="a" style="left:0;top:0;width:1px;height:540px;background:#1c6fd2"></div>
<div class="a" style="left:1021.3px;top:40px;width:1.4px;height:499px;background:#fbfbfb"></div>
<div class="a" style="left:1022.6px;top:0;width:1.4px;height:540px;background:#2a78d6"></div>
<div class="a" style="left:0;top:538.6px;width:1024px;height:1.4px;background:#2a78d6"></div>
<svg class="a" style="left:0;top:535px" width="5" height="5" viewBox="0 0 5 5"><path d="M0 0 V5 H5 Q0.8 4.6 0 0 Z" fill="#2a66b8"/></svg>
<svg class="a" style="left:1019px;top:535px" width="5" height="5" viewBox="0 0 5 5"><path d="M5 0 V5 H0 Q4.2 4.6 5 0 Z" fill="#2a66b8"/></svg>
</body></html>
